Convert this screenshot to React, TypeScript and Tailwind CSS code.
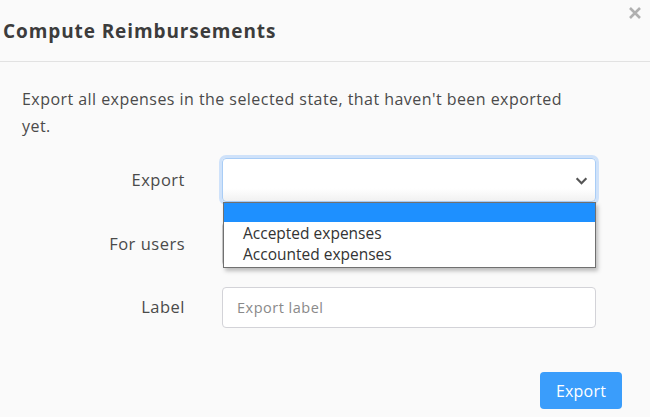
import { useState } from "react";

const OPTIONS = ["", "Accepted expenses", "Accounted expenses"];

export default function App() {
  const [label, setLabel] = useState("");

  return (
    <div className="relative w-[650px] h-[417px] bg-[#fafafa] overflow-hidden font-['Open_Sans',sans-serif] text-[#444]">
      {/* Header */}
      <div className="h-[62px] flex items-center pl-[3px] pt-[2px] border-b border-[#e2e2e2]">
        <h2 className="text-[19px] font-bold text-[#3c3c3c] tracking-[0.9px]">Compute Reimbursements</h2>
      </div>
      <button type="button" className="absolute top-[6px] right-[8px] text-[#b0b0b0]">
        <svg className="w-[14px] h-[14px]" viewBox="0 0 14 14" fill="none" stroke="currentColor" strokeWidth={2.6}>
          <path d="M2 2l10 10M12 2L2 12" />
        </svg>
      </button>

      {/* Body */}
      <div className="pl-[22px] pr-[54px] pt-[24px]">
        <p className="w-[550px] text-[16px] leading-[27px] tracking-[0.45px] text-[#4a4a4a]">
          Export all expenses in the selected state, that haven't been exported yet.
        </p>

        <div className="mt-[18px] flex flex-col">
          {/* Export */}
          <div className="flex items-center">
            <div className="w-[163px] text-right text-[16.5px] tracking-[0.5px] text-[#4a4a4a]">Export</div>
            <div className="relative ml-[37px] flex-1">
              <div className="h-[44px] rounded-[4px] border border-[#a9cdf6] ring-[3px] ring-[#cfe2fa] bg-gradient-to-b from-white from-70% to-[#f1f1f1] flex items-center justify-end pr-[7px]">
                <svg className="w-[13px] h-[13px] text-[#555]" viewBox="0 0 12 12" fill="none" stroke="currentColor" strokeWidth={2}>
                  <path d="M1.5 4l4.5 4.5L10.5 4" />
                </svg>
              </div>
              {/* Open list */}
              <div className="absolute z-10 top-[44px] left-[1px] right-0 pb-[2px] bg-white border border-[#707070] shadow-[2px_3px_4px_rgba(0,0,0,0.25)] text-[15.5px] text-[#333]">
                {OPTIONS.map((opt, i) => (
                  <div
                    key={i}
                    className={i === 0 ? "h-[19px] mb-[1px] bg-[#1e90ff]" : "h-[21px] leading-[21px] pl-[19px]"}
                  >
                    {opt}
                  </div>
                ))}
              </div>
            </div>
          </div>

          {/* For users */}
          <div className="flex items-center mt-[20px]">
            <div className="w-[163px] text-right text-[16.5px] tracking-[0.5px] text-[#4a4a4a]">For users</div>
            <div className="ml-[37px] flex-1">
              <div className="w-[71px] h-[44px] rounded-[4px] border border-[#c8c8c8] bg-white"></div>
            </div>
          </div>

          {/* Label */}
          <div className="flex items-center mt-[21px]">
            <div className="w-[163px] text-right text-[16.5px] tracking-[0.5px] text-[#4a4a4a]">Label</div>
            <div className="ml-[37px] flex-1">
              <input
                value={label}
                onChange={(e) => setLabel(e.target.value)}
                placeholder="Export label"
                className="w-full h-[41px] rounded-[4px] border border-[#d3d3d8] bg-white px-[14px] text-[14.5px] tracking-[0.5px] placeholder-[#8a8a8a] outline-none"
              />
            </div>
          </div>
        </div>
      </div>

      {/* Footer */}
      <div className="flex justify-end pr-[28px] mt-[44px]">
        <button
          type="button"
          className="w-[82px] h-[37px] rounded-[4px] bg-[#3a9dfb] text-white text-[16px] tracking-[0.2px]"
        >
          Export
        </button>
      </div>
    </div>
  );
}
